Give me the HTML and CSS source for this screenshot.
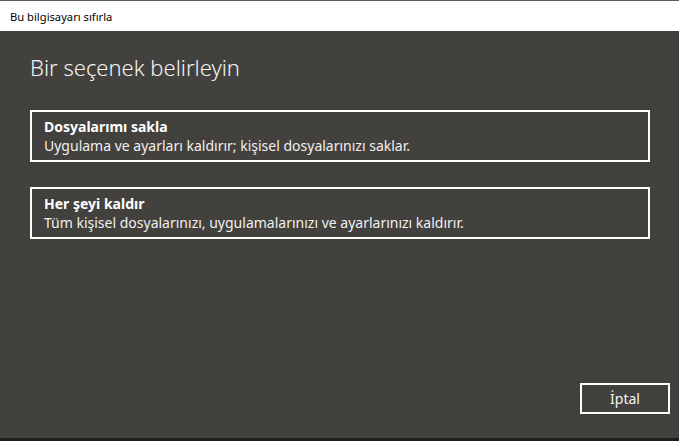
FILE: index.html
```html
<!DOCTYPE html>
<html lang="tr">
<head>
<meta charset="utf-8">
<title>Bu bilgisayarı sıfırla</title>
<link rel="stylesheet" href="styles.css">
</head>
<body>
<div class="window">
  <div class="titlebar"><span class="title">Bu bilgisayarı sıfırla</span></div>
  <div class="content">
    <h1 class="heading">Bir seçenek belirleyin</h1>
    <div class="options">
      <div class="option">
        <div class="option-title">Dosyalarımı sakla</div>
        <div class="option-desc">Uygulama ve ayarları kaldırır; kişisel dosyalarınızı saklar.</div>
      </div>
      <div class="option">
        <div class="option-title">Her şeyi kaldır</div>
        <div class="option-desc">Tüm kişisel dosyalarınızı, uygulamalarınızı ve ayarlarınızı kaldırır.</div>
      </div>
    </div>
    <div class="footer">
      <button class="btn">İptal</button>
    </div>
  </div>
  <div class="bottom-strip"></div>
</div>
</body>
</html>
```
FILE: styles.css
```css
html, body {
  margin: 0;
  padding: 0;
  background: #43413d;
}
.window {
  width: 679px;
  height: 441px;
  display: flex;
  flex-direction: column;
  font-family: "Noto Sans", "Open Sans", sans-serif;
  color: #ffffff;
  overflow: hidden;
}
.titlebar {
  height: 30px;
  border-top: 1px solid #5a5a5a;
  background: #ffffff;
  color: #000000;
  display: flex;
  align-items: center;
  padding-left: 10px;
  flex: none;
}
.title {
  font-size: 11.2px;
}
.content {
  flex: 1;
  display: flex;
  flex-direction: column;
  padding: 0 9px 0 30px;
  background: #43413d;
}
.heading {
  margin: 20px 0 0 0;
  font-size: 22px;
  font-weight: 300;
  line-height: 32px;
  color: #f4f4f4;
}
.options {
  margin-top: 27px;
  display: flex;
  flex-direction: column;
  gap: 25px;
  width: 620px;
}
.option {
  box-sizing: border-box;
  height: 52px;
  border: 2px solid #ffffff;
  padding: 5px 12px 0 12px;
}
.option-title {
  font-size: 14px;
  font-weight: 700;
  line-height: 19px;
}
.option-desc {
  font-size: 14px;
  line-height: 19px;
  color: #f0f0f0;
}
.footer {
  margin-top: auto;
  margin-bottom: 24px;
  display: flex;
  justify-content: flex-end;
}
.btn {
  box-sizing: border-box;
  width: 90px;
  height: 31px;
  border: 2px solid #ffffff;
  background: transparent;
  color: #f4f4f4;
  font-family: "Noto Sans", "Open Sans", sans-serif;
  font-size: 14px;
  padding: 0;
}
.bottom-strip {
  height: 3px;
  background: #1e1e1e;
  flex: none;
}
```
